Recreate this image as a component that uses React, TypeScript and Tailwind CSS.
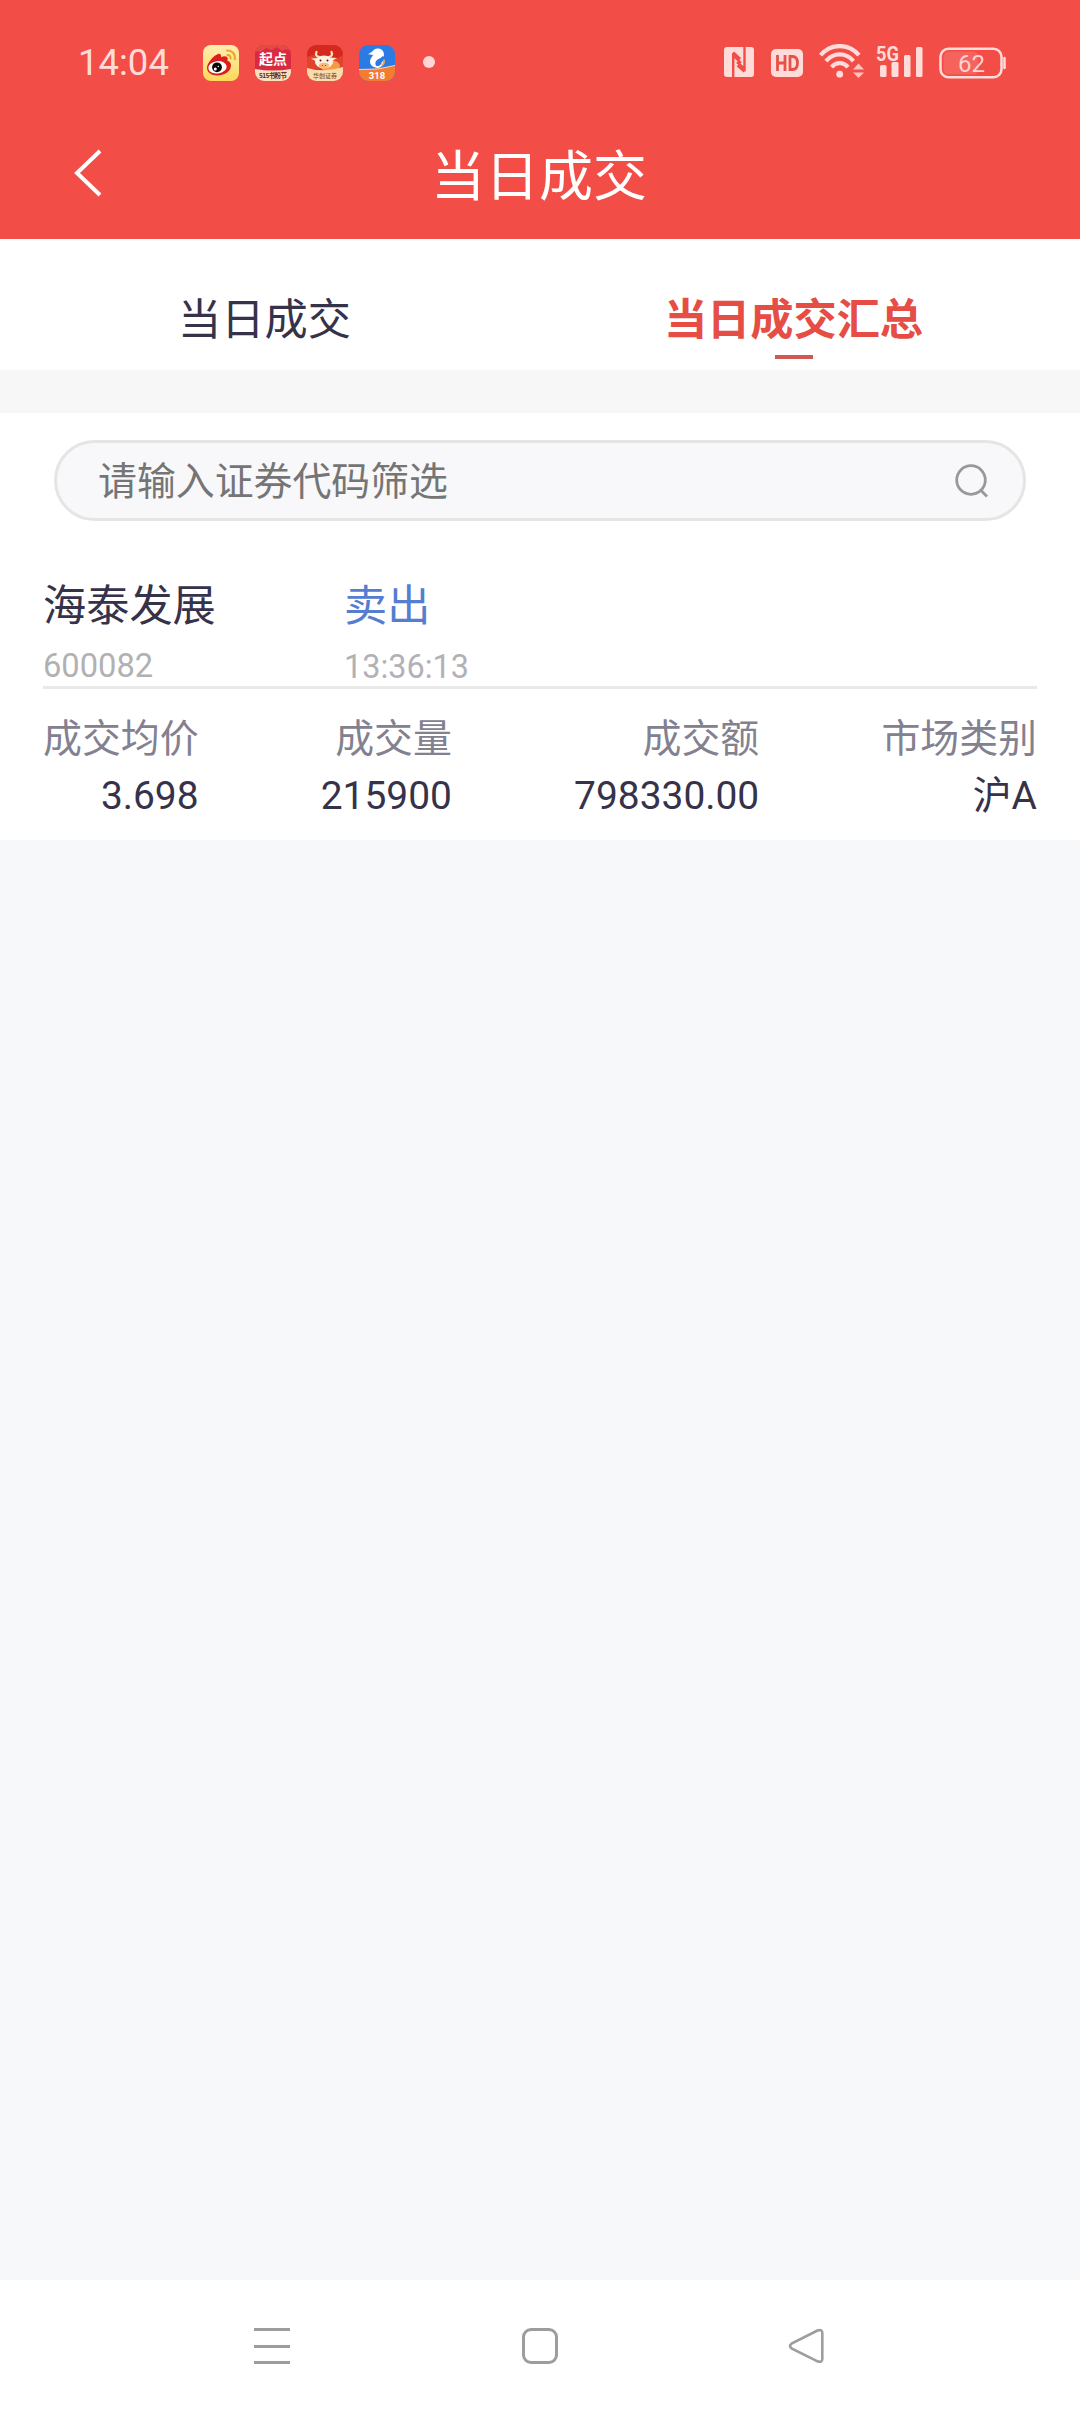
import React from "react";

interface Column {
  label: string;
  value: string;
}

const columns: Column[] = [
  { label: "成交均价", value: "3.698" },
  { label: "成交量", value: "215900" },
  { label: "成交额", value: "798330.00" },
  { label: "市场类别", value: "沪A" },
];

const cjk = "'Noto Sans CJK SC', sans-serif";

const WeiboIcon: React.FC = () => (
  <svg width="36" height="36" viewBox="0 0 36 36">
    <defs>
      <linearGradient id="weiboBg" x1="0" y1="0" x2="0" y2="1">
        <stop offset="0" stopColor="#ffeeb0" />
        <stop offset="1" stopColor="#fdd85a" />
      </linearGradient>
    </defs>
    <rect width="36" height="36" rx="8" fill="url(#weiboBg)" />
    <path
      d="M4 23c0-5 6-12 11-14 2-.7 3.600.5 3 3.200 3-1.400 6.500-1.300 6.700 1.300.1 1-.3 1.800-.3 2.300 2.600.8 3.800 2.700 3.600 5C27.500 27 21 30.500 14.500 30.500S4 27 4 23z"
      fill="#dc1f1c"
    />
    <ellipse cx="14.500" cy="22.300" rx="9.200" ry="6.200" fill="#fff" transform="rotate(-7 14.500 22.300)" />
    <circle cx="14" cy="22.300" r="4.900" fill="#0b0b0b" />
    <circle cx="12.300" cy="24" r="1.500" fill="#fff" />
    <circle cx="15.300" cy="21.500" r="0.700" fill="#fff" />
    <g fill="none" stroke="#eda32c" strokeWidth="2" strokeLinecap="round">
      <path d="M24 5.500c5-.5 8.500 3.500 7.800 8.700" />
      <path d="M24.500 10c2-.1 3.300 1.400 3 3.500" />
    </g>
  </svg>
);

const QidianIcon: React.FC = () => (
  <svg width="36" height="36" viewBox="0 0 36 36">
    <clipPath id="qidianClip">
      <rect width="36" height="36" rx="9" />
    </clipPath>
    <g clipPath="url(#qidianClip)">
      <rect width="36" height="36" fill="#da2a43" />
      <path d="M0 0h36v6l-5-2-4 2-5-4-5 3-6-2-5 4-6-1z" fill="#e34a45" />
      <path d="M0 24q18 3 36 0v12H0z" fill="#fbe0bd" />
      <text x="18" y="18.500" textAnchor="middle" fontSize="14" fontWeight="700" fill="#fff" fontFamily={cjk}>
        起点
      </text>
      <text x="18" y="32.500" textAnchor="middle" fontSize="6.500" fontWeight="700" fill="#5d2a20" textLength="28" fontFamily={cjk}>
        515书粉节
      </text>
    </g>
  </svg>
);

const BrokerIcon: React.FC = () => (
  <svg width="36" height="36" viewBox="0 0 36 36">
    <clipPath id="brokerClip">
      <rect width="36" height="36" rx="9" />
    </clipPath>
    <g clipPath="url(#brokerClip)">
      <rect width="36" height="36" fill="#d5291f" />
      <path d="M0 12q8-4 18 0t18-2v14H0z" fill="#e2432c" />
      <ellipse cx="23" cy="21" rx="10" ry="6" fill="#f59a45" />
      <g fill="none" stroke="#ffe3b5" strokeWidth="2.200" strokeLinecap="round">
        <path d="M12 12c-3-.5-3.500-3-2.500-5" />
        <path d="M22 12c3-.5 3.500-3 2.500-5" />
      </g>
      <path d="M4 13.500l6-.5v4zM30 13l-6-.5v4z" fill="#ffe5c4" />
      <ellipse cx="17" cy="17" rx="9" ry="6.500" fill="#fff1df" />
      <circle cx="13.500" cy="15.500" r="1" fill="#4b1d14" />
      <circle cx="20.500" cy="15.500" r="1" fill="#4b1d14" />
      <ellipse cx="17" cy="20.500" rx="5" ry="2.800" fill="#f9b877" />
      <circle cx="15.500" cy="20.500" r="0.600" fill="#8c3a1c" />
      <circle cx="18.500" cy="20.500" r="0.600" fill="#8c3a1c" />
      <path d="M0 23q18 5 36-1v14H0z" fill="#fadbaa" />
      <text x="18" y="33" textAnchor="middle" fontSize="6" fontWeight="500" fill="#85502c" textLength="24" fontFamily={cjk}>
        华创证券
      </text>
    </g>
  </svg>
);

const CtripIcon: React.FC = () => (
  <svg width="36" height="36" viewBox="0 0 36 36">
    <clipPath id="ctripClip">
      <rect width="36" height="36" rx="9" />
    </clipPath>
    <g clipPath="url(#ctripClip)">
      <rect width="36" height="36" fill="#2c7be5" />
      <path d="M0 25q18-1 36-4v15H0z" fill="#f47b32" />
      <path d="M0 24.500q19 1 36-4" fill="none" stroke="#ffd9a0" strokeWidth="1" />
      <path
        d="M9 9.300L13 6.800C14.500 4.300 17 3 20 3.600c3.700.7 5.500 3.900 4.800 7.900l-1.600-.2c-.8 2-3.500 2.200-5.200 3.700-2 1.800-2.300 4.300-.3 6.500l-2.200.8c-3.500-1.300-5.200-4.500-4.200-7.600.6-1.900 2-3 2.700-4.700-1.600-.3-3.400-.4-5-.7z"
        fill="#fff"
      />
      <path d="M16 21.500c3.500 1.500 7.500-.5 8-5" fill="none" stroke="#fff" strokeWidth="1.800" />
      <path d="M24.800 14.500c.8 2.300 0 4.500-2 6" fill="none" stroke="#f6a53d" strokeWidth="1.800" />
      <text x="18" y="33.500" textAnchor="middle" fontSize="9.500" fontWeight="700" fill="#fff" fontFamily="Roboto, sans-serif">
        318
      </text>
    </g>
  </svg>
);

const NfcIcon: React.FC = () => (
  <svg className="ml-auto" width="30" height="30" viewBox="0 0 30 30">
    <rect width="30" height="30" rx="3" fill="#ffdcda" />
    <path
      d="M9.200 30V8.500L17 16M9.200 5.500l7 6.500M20.500 0v22l-7.500-7M20.500 24.500l-7-6"
      fill="none"
      stroke="#f24d46"
      strokeWidth="2.400"
    />
  </svg>
);

const HdIcon: React.FC = () => (
  <svg className="ml-[17px] mt-0.5" width="32" height="28" viewBox="0 0 32 28">
    <rect width="32" height="28" rx="5" fill="#ffdcda" />
    <path
      d="M6.500 6v16M14 6v16M6.500 14H14M19 7.500v13h2.500c3.500 0 5-2 5-6.500s-1.500-6.500-5-6.500z"
      fill="none"
      stroke="#e8504a"
      strokeWidth="2.800"
    />
  </svg>
);

const WifiIcon: React.FC = () => (
  <svg className="ml-4 -mt-0.5" width="45" height="34" viewBox="0 0 45 34">
    <g fill="none" stroke="#ffdcda" strokeWidth="4.200">
      <path d="M1.500 11.200C12-1 29.500-1 40 11.200" />
      <path d="M7 17.200c7.500-9 20-9 27.500 0" />
      <path d="M12.500 23.200c4.500-5.500 12-5.500 16.500 0" />
    </g>
    <circle cx="20.700" cy="30.200" r="3.400" fill="#ffdcda" />
    <path d="M34 25.500l5.500-6 5.500 6zM34 28.500h11l-5.500 5.500z" fill="#ffc4c0" />
  </svg>
);

const SignalIcon: React.FC = () => (
  <svg className="ml-3 overflow-visible" width="47" height="34" viewBox="0 0 47 34">
    <text x="0" y="15.500" fontSize="20" fontWeight="700" fill="#ffdcda" textLength="23" lengthAdjust="spacingAndGlyphs" fontFamily="Roboto, sans-serif">
      5G
    </text>
    <g fill="#ffdcda">
      <rect x="4" y="20" width="6.500" height="12" rx="1.500" />
      <rect x="15.500" y="17" width="7" height="15" rx="1.500" />
      <rect x="28" y="10" width="6.500" height="22" rx="1.500" />
      <rect x="40" y="2" width="6.500" height="30" rx="1.500" />
    </g>
  </svg>
);

const BatteryIcon: React.FC = () => (
  <svg className="ml-4 mt-px" width="68" height="32" viewBox="0 0 68 32">
    <rect x="1.500" y="1.800" width="61" height="28.500" rx="8" fill="none" stroke="#ffdcda" strokeWidth="2.500" />
    <rect x="4.500" y="4.500" width="35" height="23" rx="5" fill="#f5635c" />
    <path d="M65.500 11v10" stroke="#ffdcda" strokeWidth="2.500" strokeLinecap="round" />
    <text x="32.500" y="24.500" textAnchor="middle" fontSize="24" fill="#ffd2cf" fontFamily="Roboto, sans-serif">
      62
    </text>
  </svg>
);

const StatusBar: React.FC = () => (
  <div className="flex h-[124px] items-center pl-[78px] pr-[73px]">
    <span className="mt-0.5 w-[125px] text-[36.5px] leading-none text-[#ffdcda]">14:04</span>
    <div className="mt-px flex items-center gap-4">
      <WeiboIcon />
      <QidianIcon />
      <BrokerIcon />
      <CtripIcon />
    </div>
    <span className="ml-7 size-3 rounded-full bg-[#ffd6d4]" />
    <NfcIcon />
    <HdIcon />
    <WifiIcon />
    <SignalIcon />
    <BatteryIcon />
  </div>
);

const Header: React.FC = () => (
  <div className="flex h-[115px] items-center pl-[73px]">
    <svg className="-mt-[18px]" width="30" height="50" viewBox="0 0 30 50" fill="none">
      <path d="M27 3L4 25l23 22" stroke="#fff" strokeWidth="4" />
    </svg>
    <h1 className="mr-[105px] -mt-2 flex-1 text-center text-[54px] leading-none text-white">
      当日成交
    </h1>
  </div>
);

const Tabs: React.FC = () => (
  <div className="flex h-[131px] bg-white pr-[22px] text-[43.2px]">
    <div className="flex-1 pt-[50px] text-center leading-[64px] text-[#36324a]">当日成交</div>
    <div className="flex flex-1 flex-col items-center pt-[50px] font-bold leading-[64px] text-[#e54d45]">
      当日成交汇总
      <span className="mt-0.5 h-1 w-[38px] bg-[#cf5a55]" />
    </div>
  </div>
);

const SearchBox: React.FC = () => (
  <div className="mx-[54px] flex h-[81px] items-center justify-between rounded-full border-3 border-[#e5e5e5] bg-[#f8f8fa] pl-[41px] pr-[34px]">
    <span className="mt-1 text-[38.9px] leading-none text-[#757575]">请输入证券代码筛选</span>
    <svg width="34" height="34" viewBox="0 0 34 34" fill="none" stroke="#97989a" strokeWidth="2.800">
      <circle cx="16" cy="16" r="14.300" />
      <path d="M26 26.500l6 6" />
    </svg>
  </div>
);

const TradeCard: React.FC = () => (
  <div className="mx-[43px]">
    <div className="flex h-[168px] border-b-3 border-[#e9e9ea]">
      <div className="w-[301px] pt-14">
        <div className="text-[43.2px] leading-[60px] text-[#36324a]">海泰发展</div>
        <div className="mt-[9px] text-[32.7px] leading-10 text-[#b1b1b3]">600082</div>
      </div>
      <div className="pt-14">
        <div className="text-[43.2px] leading-[60px] text-[#557dd0]">卖出</div>
        <div className="mt-2.5 text-[32.4px] leading-10 text-[#b1b1b7]">13:36:13</div>
      </div>
    </div>
    <div className="flex justify-between pt-[23px] text-right text-[38.9px]">
      {columns.map((column) => (
        <div key={column.label}>
          <div className="leading-[54px] text-[#838190]">{column.label}</div>
          <div className="mt-px leading-[58px] text-[#36324a]">{column.value}</div>
        </div>
      ))}
    </div>
  </div>
);

const NavBar: React.FC = () => (
  <div className="flex h-[132px] items-center justify-between bg-white pl-[254px] pr-64">
    <div className="flex h-9 w-9 flex-col justify-between">
      <span className="h-[3px] bg-[#9d9d9d]" />
      <span className="h-[3px] bg-[#9d9d9d]" />
      <span className="h-[3px] bg-[#9d9d9d]" />
    </div>
    <span className="ml-0.5 size-9 rounded-[9px] border-3 border-[#9d9d9d]" />
    <svg width="36" height="36" viewBox="0 0 36 36" fill="none">
      <path
        d="M29.500 2.500L3.500 15.700Q.5 18 3.500 20.300L29.500 33.300Q34.300 35 34.300 31V5Q34.300 1 29.500 2.500z"
        stroke="#9d9d9d"
        strokeWidth="2.600"
      />
    </svg>
  </div>
);

const App: React.FC = () => {
  return (
    <div className="flex h-[2412px] w-[1080px] flex-col bg-[#f7f8fa] font-[Roboto,'Noto_Sans_CJK_SC',sans-serif]">
      <div className="bg-[#f24d46]">
        <StatusBar />
        <Header />
      </div>
      <Tabs />
      <div className="h-[43px] bg-[#f7f7f7]" />
      <div className="h-[427px] bg-white pt-[27px]">
        <SearchBox />
        <TradeCard />
      </div>
      <div className="flex-1" />
      <NavBar />
    </div>
  );
};

export default App;
